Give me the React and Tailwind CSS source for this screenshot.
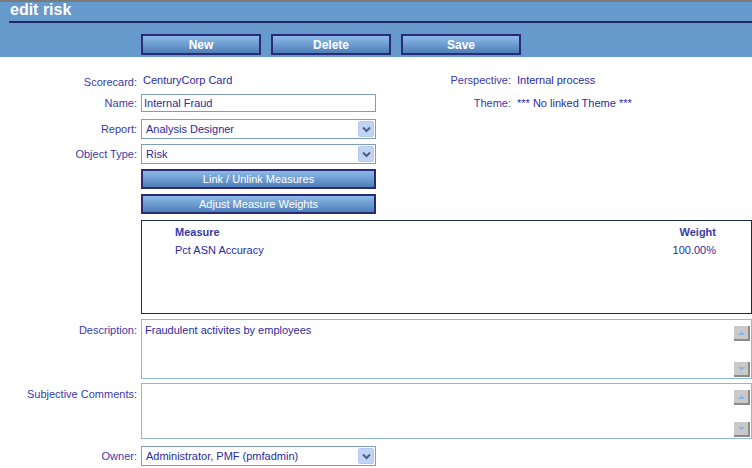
import React from "react";

const F = { fontFamily: '"Liberation Sans", Arial, sans-serif' };

function HeadBtn({ children, w = "w-[120px]" }) {
  return (
    <div
      className={`${w} h-[21px] border-2 border-[#2a2a78] bg-gradient-to-b from-[#8dbae8] to-[#4f7fb9] flex items-center justify-center text-white font-bold text-[12px]`}
    >
      {children}
    </div>
  );
}

function WideBtn({ children }) {
  return (
    <div className="w-[235px] h-[20px] border-2 border-[#2a2a78] bg-gradient-to-b from-[#8dbae8] to-[#4f7fb9] flex items-center justify-center text-white text-[11px]">
      {children}
    </div>
  );
}

function Select({ value }) {
  return (
    <div className="w-[235px] h-[20px] border border-[#7f9db9] bg-white flex items-center justify-between pl-[4px] pr-[1px]">
      <span className="text-[11px] text-[#2b2b9b]">{value}</span>
      <div className="w-[16px] h-[16px] bg-[#c3d3f5] border border-[#b5c8ef] rounded-[2px] flex items-center justify-center">
        <svg width="9" height="7" viewBox="0 0 9 7">
          <path d="M1 1.5 L4.5 5 L8 1.5" stroke="#4d6185" strokeWidth="2" fill="none" />
        </svg>
      </div>
    </div>
  );
}

function ScrollBtn({ up }) {
  return (
    <div className="w-[16px] h-[15px] bg-[#c9c9c9] border-r-2 border-b-2 border-[#8a8a8a] flex items-center justify-center">
      <svg width="9" height="6" viewBox="0 0 9 6">
        {up ? (
          <path d="M1 5 L4.5 1.5 L8 5 Z" fill="#8fb3e6" />
        ) : (
          <path d="M1 1 L4.5 4.5 L8 1 Z" fill="#8fb3e6" />
        )}
      </svg>
    </div>
  );
}

function TextArea({ h, text }) {
  return (
    <div className={`w-[611px] ${h} border border-[#8fb6df] bg-white flex justify-between`}>
      <div className="pl-[3px] pt-[2px] text-[11px] text-[#2b2b9b]">{text}</div>
      <div className="flex flex-col justify-between pt-[6px] pb-[1px] pr-[1px]">
        <ScrollBtn up />
        <ScrollBtn />
      </div>
    </div>
  );
}

function Row({ label, children, cls = "", lcls = "" }) {
  return (
    <div className={`flex ${cls}`}>
      <div className={`w-[141px] text-right pr-[4px] text-[11px] text-[#3a3aa8] shrink-0 ${lcls}`}>{label}</div>
      {children}
    </div>
  );
}

export default function App() {
  return (
    <div className="w-[752px] h-[468px] bg-white overflow-hidden" style={F}>
      <div className="bg-[#6699cc] border-t-2 border-[#7a7a7a] h-[57px]">
        <div className="pl-[10px] h-[19px] leading-[16px] text-white font-bold text-[16px]">edit risk</div>
        <div className="ml-[9px] h-[2px] bg-[#24246c]"></div>
        <div className="flex gap-[10px] pl-[141px] pt-[11px]">
          <HeadBtn>New</HeadBtn>
          <HeadBtn>Delete</HeadBtn>
          <HeadBtn>Save</HeadBtn>
        </div>
      </div>

      <div className="flex pt-[17px] h-[37px]">
        <Row label="Scorecard:">
          <span className="w-[235px] text-[11px] text-[#2b2b9b] pl-[2px] leading-[13px]">CenturyCorp Card</span>
        </Row>
        <div className="w-[138px] text-right pr-[3px] text-[11px] text-[#3a3aa8] leading-[13px]">Perspective:</div>
        <span className="text-[11px] text-[#2b2b9b] pl-[3px] leading-[13px]">Internal process</span>
      </div>

      <div className="flex items-center">
        <Row label="Name:" cls="items-center">
          <div className="w-[235px] h-[18px] border border-[#7f9db9] flex items-center pl-[2px] text-[11px] text-[#2b2b9b]">
            Internal Fraud
          </div>
        </Row>
        <div className="w-[138px] text-right pr-[3px] text-[11px] text-[#3a3aa8]">Theme:</div>
        <span className="text-[11px] text-[#2b2b9b] pl-[3px]">*** No linked Theme ***</span>
      </div>

      <div className="flex flex-col gap-[5px] mt-[7px]">
        <Row label="Report:" cls="items-center">
          <Select value="Analysis Designer" />
        </Row>
        <Row label="Object Type:" cls="items-center">
          <Select value="Risk" />
        </Row>
        <Row label="">
          <WideBtn>Link / Unlink Measures</WideBtn>
        </Row>
        <Row label="">
          <WideBtn>Adjust Measure Weights</WideBtn>
        </Row>
      </div>

      <div className="pl-[141px] mt-[6px]">
        <div className="w-[611px] h-[94px] border border-[#1c2b50] pt-[3px]">
          <div className="flex justify-between pl-[33px] pr-[35px] text-[11px] font-bold text-[#3a3aa8]">
            <span>Measure</span>
            <span>Weight</span>
          </div>
          <div className="flex justify-between pl-[33px] pr-[35px] pt-[1px] text-[11px] text-[#2b2b9b]">
            <span>Pct ASN Accuracy</span>
            <span>100.00%</span>
          </div>
        </div>
      </div>

      <div className="flex flex-col mt-[5px]">
        <Row label="Description:" lcls="pt-[3px]">
          <TextArea h="h-[60px]" text="Fraudulent activites by employees" />
        </Row>
        <Row label="Subjective Comments:" cls="mt-[4px]" lcls="pt-[3px]">
          <TextArea h="h-[56px]" text="" />
        </Row>
        <Row label="Owner:" cls="items-center mt-[7px]">
          <Select value="Administrator, PMF (pmfadmin)" />
        </Row>
      </div>
    </div>
  );
}
